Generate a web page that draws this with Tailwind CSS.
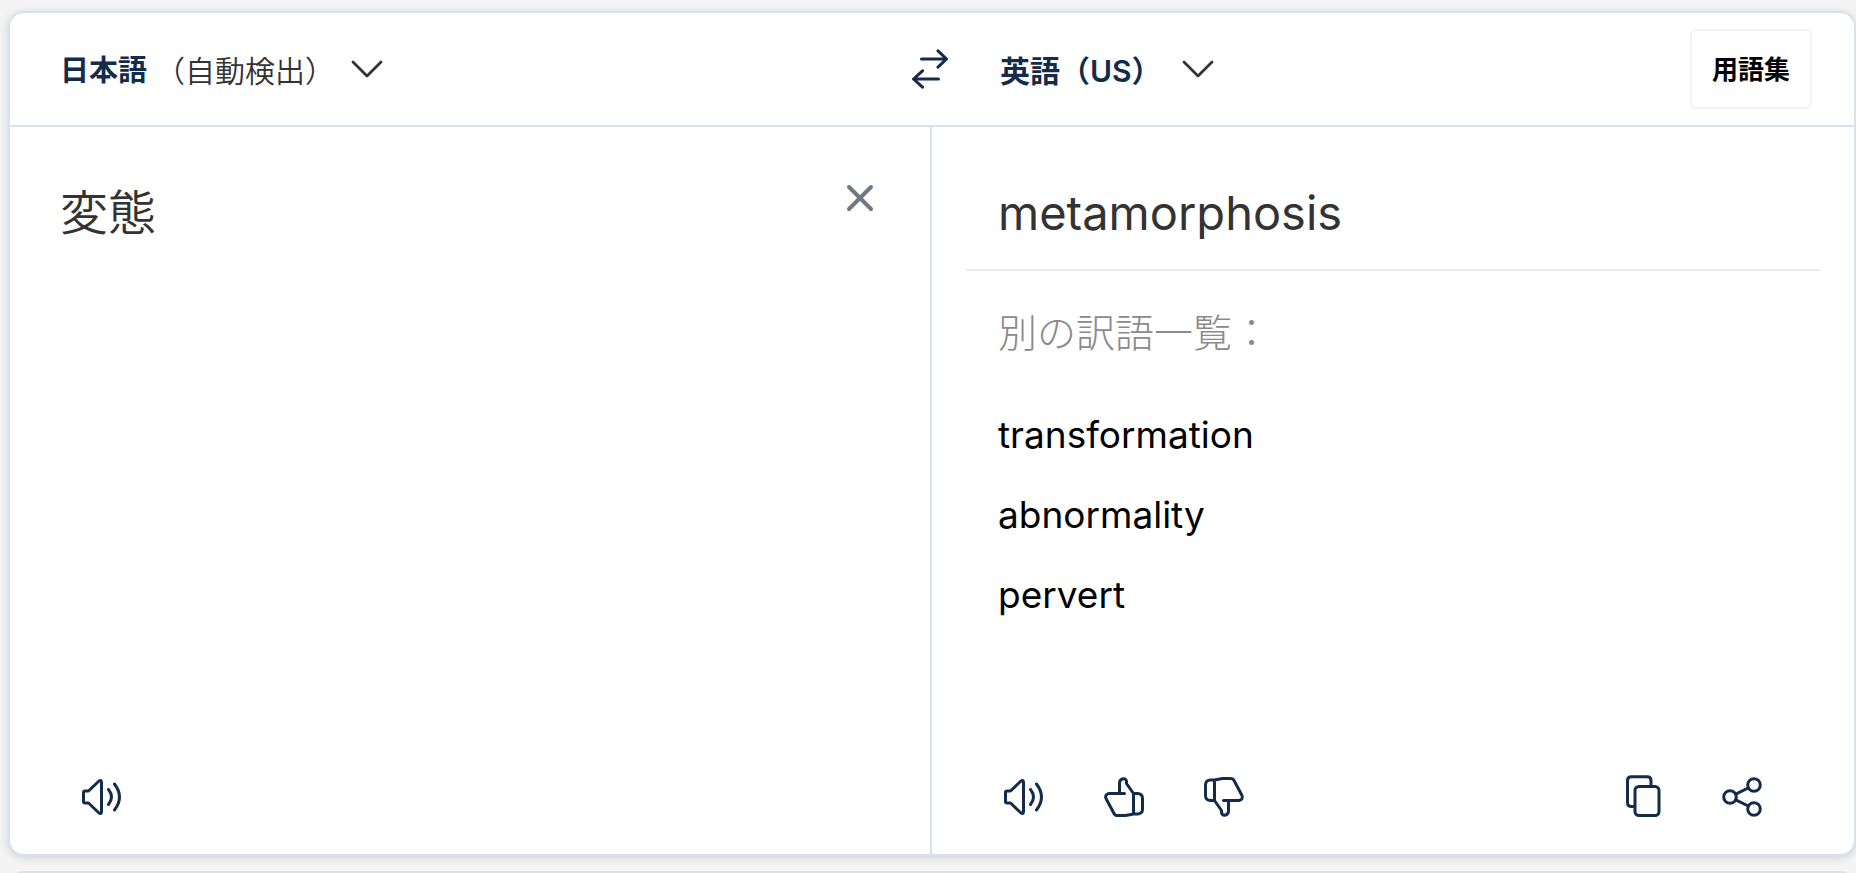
<!DOCTYPE html>
<html lang="ja">
<head>
<meta charset="utf-8">
<meta name="viewport" content="width=device-width, initial-scale=1">
<title>翻訳</title>
<script src="https://cdn.jsdelivr.net/npm/@tailwindcss/browser@4"></script>
</head>
<body class="bg-[#f4f4f4] font-['Inter','Noto_Sans_CJK_JP',sans-serif] text-[#333333]">
<div class="flex h-screen min-h-[640px] flex-col overflow-hidden pt-[11px] pl-2">
  <main class="grid flex-1 grid-cols-2 grid-rows-[auto_1fr] rounded-2xl border-2 border-[#dae1e8] bg-white shadow-[0_2px_10px_rgba(0,0,0,0.14)]">
    <!-- Source language -->
    <div class="flex h-[114px] items-center justify-between border-b-2 border-[#dae1e8] pl-[50px]">
      <button type="button" class="flex items-center text-[30px] leading-10">
        <strong class="pt-1 text-[29px] font-bold text-[#142b4a]">日本語</strong>
        <span class="ml-2 pt-1 font-[350]">（自動検出）</span>
        <svg class="ml-4 h-5 w-8" viewBox="0 0 32 20" fill="none" stroke="currentColor" stroke-width="2.8" stroke-linecap="round" stroke-linejoin="round" aria-hidden="true"><path d="M2 3 16 17 30 3"/></svg>
      </button>
      <button type="button" aria-label="言語を入れ替える" class="-mr-4 text-[#142b4a]">
        <svg class="h-10 w-9" viewBox="0 0 36 40" fill="none" stroke="currentColor" stroke-width="3" stroke-linecap="round" stroke-linejoin="round" aria-hidden="true"><path d="M9.500 10H34.500M26 1.800 34.500 10 26 18.200M26.500 30H1.500M10.500 21.800 1.500 30 10.500 38.200"/></svg>
      </button>
    </div>
    <!-- Target language -->
    <div class="flex h-[114px] items-center justify-between border-b-2 border-[#dae1e8] pr-[42px] pl-[68px]">
      <button type="button" class="flex items-center text-[30px] leading-10">
        <strong class="pt-1 font-semibold text-[#142b4a]">英語（US）</strong>
        <svg class="ml-5 h-5 w-8" viewBox="0 0 32 20" fill="none" stroke="currentColor" stroke-width="2.8" stroke-linecap="round" stroke-linejoin="round" aria-hidden="true"><path d="M2 3 16 17 30 3"/></svg>
      </button>
      <button type="button" class="h-20 rounded-md border-2 border-[#f2f2f2] px-5 text-[26px] font-bold text-black">用語集</button>
    </div>
    <!-- Source text -->
    <section class="flex flex-col border-r-2 border-[#dae1e8] pb-[33px] pl-[50px]">
      <div class="flex flex-1 items-start pr-14">
        <textarea aria-label="原文" class="h-full min-w-0 flex-1 resize-none pt-[50px] text-[48px] leading-[72px] font-[350] outline-none">変態</textarea>
        <button type="button" aria-label="原文を消去" class="mt-[57px] text-[#6f7780]">
          <svg class="h-7 w-7" viewBox="0 0 28 28" fill="none" stroke="currentColor" stroke-width="4" stroke-linecap="round" aria-hidden="true"><path d="M3 3 25 25M25 3 3 25"/></svg>
        </button>
      </div>
      <div class="flex h-12 items-center pl-5 text-[#142b4a]">
        <button type="button" aria-label="原文を読み上げる">
          <svg class="h-11 w-11" viewBox="0 0 44 44" fill="none" stroke="currentColor" stroke-width="3" stroke-linecap="round" stroke-linejoin="round" aria-hidden="true"><path d="M5 16H8.500L19 6Q21.500 4.500 21.500 7.500V36.500Q21.500 39.500 19 38L8.500 28H5Q3.500 28 3.500 26.500V17.500Q3.500 16 5 16ZM28.500 14.500Q34.500 22 28.500 29.500M34.500 9Q44.500 22 34.500 35"/></svg>
        </button>
      </div>
    </section>
    <!-- Translation -->
    <section class="flex flex-col pr-[34px] pb-[33px] pl-[34px]">
      <div class="border-b-2 border-[#ebebeb] px-8 pt-[50px] pb-5">
        <p class="text-[47px] leading-[72px]">metamorphosis</p>
      </div>
      <div class="flex-1 px-8 pt-8">
        <h2 class="text-[39px] leading-[60px] font-light text-[#8a8a8a]">別の訳語一覧：</h2>
        <ul class="mt-8 text-[37px] leading-[80px] text-black">
          <li><button type="button" class="block">transformation</button></li>
          <li><button type="button" class="block">abnormality</button></li>
          <li><button type="button" class="block">pervert</button></li>
        </ul>
      </div>
      <div class="flex h-12 items-center gap-14 pr-14 pl-9 text-[#142b4a]">
        <button type="button" aria-label="訳文を読み上げる">
          <svg class="h-11 w-11" viewBox="0 0 44 44" fill="none" stroke="currentColor" stroke-width="3" stroke-linecap="round" stroke-linejoin="round" aria-hidden="true"><path d="M5 16H8.500L19 6Q21.500 4.500 21.500 7.500V36.500Q21.500 39.500 19 38L8.500 28H5Q3.500 28 3.500 26.500V17.500Q3.500 16 5 16ZM28.500 14.500Q34.500 22 28.500 29.500M34.500 9Q44.500 22 34.500 35"/></svg>
        </button>
        <button type="button" aria-label="良い訳文">
          <svg class="h-11 w-11" viewBox="0 0 44 44" fill="none" stroke="currentColor" stroke-width="3" stroke-linecap="round" stroke-linejoin="round" aria-hidden="true"><path d="M22.500 18.500H7Q2.500 19.500 4 23.500L12 38.500Q13 40.500 15.500 40.500H23.500L31.500 39V18.500L24.500 8.500V6.500Q24 3.500 21 3.800Q17.500 4.500 17.500 8V18.500M31.500 18.500H36Q40.500 19 40.500 23.500V34Q40.500 38.500 36 39H31.500"/></svg>
        </button>
        <button type="button" aria-label="悪い訳文">
          <svg class="h-11 w-11" viewBox="0 0 44 44" fill="none" stroke="currentColor" stroke-width="3" stroke-linecap="round" stroke-linejoin="round" aria-hidden="true"><path d="M21.500 25.500H37Q41.500 24.500 40 20.500L32 5.500Q31 3.500 28.500 3.500H20.500L12.500 5V25.500L19.500 35.500V37.500Q20 40.500 23 40.200Q26.500 39.500 26.500 36V25.500M12.500 25.500H8Q3.500 25 3.500 20.500V10Q3.500 5.500 8 5H12.500"/></svg>
        </button>
        <span class="flex-1"></span>
        <button type="button" aria-label="コピー">
          <svg class="h-11 w-11" viewBox="0 0 44 44" fill="none" stroke="currentColor" stroke-width="3" stroke-linecap="round" stroke-linejoin="round" aria-hidden="true"><rect x="15" y="11.500" width="24" height="29" rx="4"/><path d="M13 31.500H11.500Q7.500 31.500 7.500 27.500V5.500Q7.500 1.800 11.500 1.800H27Q31 1.800 31 5.500V10"/></svg>
        </button>
        <button type="button" aria-label="共有">
          <svg class="h-11 w-11" viewBox="0 0 44 44" fill="none" stroke="currentColor" stroke-width="3" stroke-linecap="round" aria-hidden="true"><circle cx="10" cy="22" r="6.300"/><circle cx="34" cy="10" r="6.300"/><circle cx="34" cy="34" r="6.300"/><path d="M15.800 19.200 28.200 13M15.800 24.800 28.200 31"/></svg>
        </button>
      </div>
    </section>
  </main>
  <div class="mt-[15px] h-0.5 shrink-0 overflow-hidden">
    <div class="h-10 rounded-2xl border-2 border-[#dae1e8] bg-white"></div>
  </div>
</div>
</body>
</html>
